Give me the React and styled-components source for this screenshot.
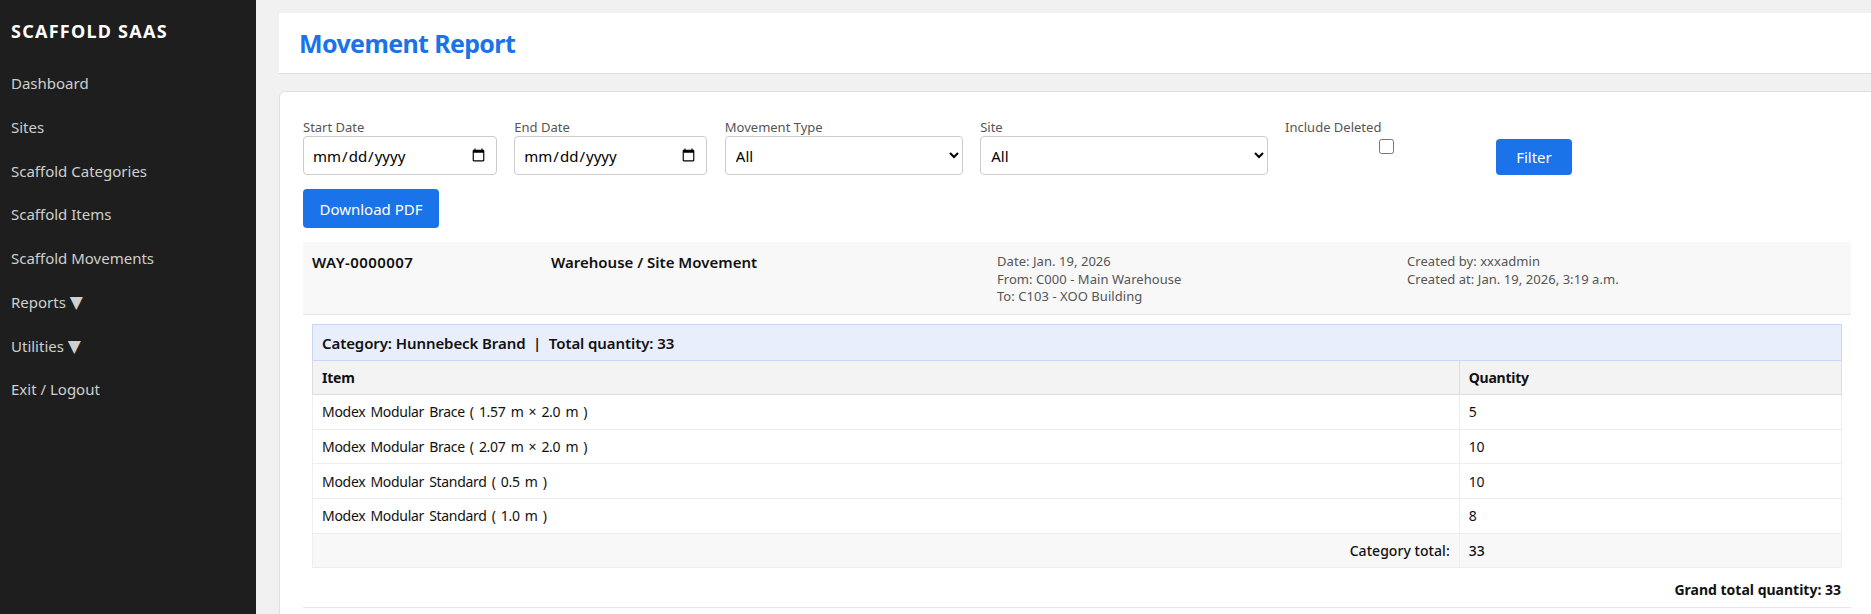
import React from "react";
import styled, { createGlobalStyle } from "styled-components";

const FONT = `"Noto Sans", "Open Sans", "Liberation Sans", sans-serif`;

const Global = createGlobalStyle`
  html, body { margin: 0; padding: 0; height: 614px; overflow: hidden; background: #f1f1f1; }
  * { box-sizing: border-box; }
  body { font-family: ${FONT}; }
`;

const Shell = styled.div`
  display: flex;
  height: 614px;
  overflow: hidden;
`;
const Sidebar = styled.aside`
  flex: 0 0 256px;
  background: #1e1e1e;
  padding: 20px 11px 0;
`;
const Brand = styled.div`
  color: #fff;
  font-size: 18px;
  font-weight: 700;
  line-height: 23px;
  letter-spacing: 1.25px;
  margin-bottom: 19px;
  white-space: nowrap;
`;
const NavLink = styled.a`
  display: block;
  height: 43.75px;
  line-height: 43.75px;
  color: #cfcfcf;
  font-size: 15px;
  white-space: nowrap;
`;
const Caret = styled.span`
  font-family: "DejaVu Sans", sans-serif;
  font-size: 17px;
  line-height: 0;
  color: #cfcfcf;
`;
const Main = styled.main`
  flex: 1;
  min-width: 0;
  padding: 13px 0 0 23px;
`;
const PageHeader = styled.header`
  height: 61px;
  background: #fff;
  border-bottom: 1px solid #ddd;
  padding-left: 20px;
  margin-bottom: 17px;
`;
const Title = styled.h1`
  margin: 0;
  color: #1a73e8;
  font-size: 25px;
  line-height: 60px;
  font-weight: 700;
  letter-spacing: -0.63px;
`;
const Card = styled.section`
  background: #fff;
  border: 1px solid #e0e0e0;
  border-right: 0;
  border-bottom: 0;
  border-top-left-radius: 6px;
  padding: 26px 20px 0 23px;
  height: 540px;
`;
const FilterRow = styled.form`
  display: flex;
  align-items: flex-start;
  flex-wrap: wrap;
  gap: 14px 17.5px;
`;
const Field = styled.div`
  flex: 0 0 ${(p) => p.$w}px;
  display: flex;
  flex-direction: column;
`;
const Label = styled.label`
  color: #555;
  font-size: 13px;
  line-height: 18px;
  white-space: nowrap;
`;
const DateInput = styled.input`
  width: 100%;
  height: 39px;
  border: 1px solid #ccc;
  border-radius: 4px;
  background: #fff;
  padding: 0 8px;
  font-family: ${FONT};
  font-size: 15px;
  color: #000;
`;
const Select = styled.select`
  width: 100%;
  height: 39px;
  border: 1px solid #ccc;
  border-radius: 4px;
  background: #fff;
  padding: 0 6px;
  font-family: ${FONT};
  font-size: 15px;
  color: #000;
`;
const Check = styled.input`
  width: 15px;
  height: 15px;
  margin: 3px 0 0 94px;
`;
const Button = styled.button`
  background: #1a73e8;
  color: #fff;
  border: 0;
  border-radius: 4px;
  font-family: ${FONT};
  font-size: 15px;
  padding: 0;
  width: ${(p) => p.$w}px;
  height: ${(p) => p.$h}px;
  margin-top: ${(p) => p.$mt || 0}px;
`;
const FullRow = styled.div`
  flex: 0 0 100%;
  height: 39px;
`;
const Movement = styled.div`
  display: flex;
  height: 73px;
  background: #f8f8f8;
  border-bottom: 1px solid #e6e6e6;
  margin-top: 14px;
  padding: 11px 0 0 9px;
`;
const WayNo = styled.div`
  flex: 0 0 ${(p) => p.$w}px;
  font-size: 15px;
  font-weight: 600;
  line-height: 18px;
  letter-spacing: ${(p) => p.$ls || 0}px;
  color: #111;
`;
const Meta = styled.div`
  flex: 0 0 ${(p) => p.$w}px;
  color: #555;
  font-size: 13px;
  line-height: 17.7px;
  letter-spacing: 0.05px;
`;
const Table = styled.table`
  width: 1530px;
  margin: 9px 0 0 9px;
  border-collapse: collapse;
  table-layout: fixed;
  font-size: 14px;
  color: #111;
`;
const CatCell = styled.th`
  height: 36px;
  background: #e8eefb;
  border: 1px solid #c8d6f5;
  padding: 0 9px;
  text-align: left;
  font-size: 15px;
  font-weight: 600;
  letter-spacing: -0.09px;
`;
const HeadCell = styled.th`
  height: 34px;
  background: #f3f3f3;
  border: 1px solid #ddd;
  padding: 0 9px;
  text-align: left;
  font-weight: 700;
  letter-spacing: -0.25px;
`;
const Cell = styled.td`
  height: 34.7px;
  border: 1px solid #eee;
  padding: 0 9px;
  font-weight: 400;
  letter-spacing: -0.3px;
  word-spacing: 1.8px;
`;
const FootCell = styled.td`
  height: 34px;
  background: #f8f8f8;
  border: 1px solid #eee;
  padding: 0 9px;
  font-weight: 500;
  letter-spacing: 0.05px;
  text-align: ${(p) => p.$align || "left"};
`;
const Grand = styled.div`
  height: 40px;
  line-height: 44px;
  border-bottom: 1px solid #e8e8e8;
  text-align: right;
  padding-right: 10px;
  font-size: 14px;
  font-weight: 700;
  color: #111;
`;

const items = [
  ["Modex Modular Brace ( 1.57 m × 2.0 m )", 5],
  ["Modex Modular Brace ( 2.07 m × 2.0 m )", 10],
  ["Modex Modular Standard ( 0.5 m )", 10],
  ["Modex Modular Standard ( 1.0 m )", 8],
];
const nav = [
  ["Dashboard"],
  ["Sites"],
  ["Scaffold Categories"],
  ["Scaffold Items"],
  ["Scaffold Movements"],
  ["Reports", true],
  ["Utilities", true],
  ["Exit / Logout"],
];

export default function App() {
  return (
    <Shell>
      <Global />
      <Sidebar>
        <Brand>SCAFFOLD SAAS</Brand>
        <nav>
          {nav.map(([n, caret]) => (
            <NavLink key={n}>
              {n}
              {caret && <> <Caret>▼</Caret></>}
            </NavLink>
          ))}
        </nav>
      </Sidebar>
      <Main>
        <PageHeader>
          <Title>Movement Report</Title>
        </PageHeader>
        <Card>
          <FilterRow>
            <Field $w={193.8}>
              <Label>Start Date</Label>
              <DateInput type="date" />
            </Field>
            <Field $w={193}>
              <Label>End Date</Label>
              <DateInput type="date" />
            </Field>
            <Field $w={237.9}>
              <Label>Movement Type</Label>
              <Select><option>All</option></Select>
            </Field>
            <Field $w={287.4}>
              <Label>Site</Label>
              <Select><option>All</option></Select>
            </Field>
            <Field $w={193.4}>
              <Label>Include Deleted</Label>
              <Check type="checkbox" />
            </Field>
            <Button type="button" $w={76} $h={36} $mt={21}>Filter</Button>
            <FullRow>
              <Button type="button" $w={136} $h={39}>Download PDF</Button>
            </FullRow>
          </FilterRow>
          <Movement>
            <WayNo $w={239} $ls={0.4}>WAY-0000007</WayNo>
            <WayNo $w={446}>Warehouse / Site Movement</WayNo>
            <Meta $w={410}>
              Date: Jan. 19, 2026<br />
              From: C000 - Main Warehouse<br />
              To: C103 - XOO Building
            </Meta>
            <Meta $w={400}>
              Created by: xxxadmin<br />
              Created at: Jan. 19, 2026, 3:19 a.m.
            </Meta>
          </Movement>
          <Table>
            <colgroup>
              <col style={{ width: "75%" }} />
              <col style={{ width: "25%" }} />
            </colgroup>
            <thead>
              <tr>
                <CatCell colSpan={2}>Category: Hunnebeck Brand &nbsp;|&nbsp; Total quantity: 33</CatCell>
              </tr>
              <tr>
                <HeadCell>Item</HeadCell>
                <HeadCell>Quantity</HeadCell>
              </tr>
            </thead>
            <tbody>
              {items.map(([name, q]) => (
                <tr key={name}>
                  <Cell>{name}</Cell>
                  <Cell>{q}</Cell>
                </tr>
              ))}
              <tr>
                <FootCell $align="right">Category total:</FootCell>
                <FootCell>33</FootCell>
              </tr>
            </tbody>
          </Table>
          <Grand>Grand total quantity: 33</Grand>
        </Card>
      </Main>
    </Shell>
  );
}
